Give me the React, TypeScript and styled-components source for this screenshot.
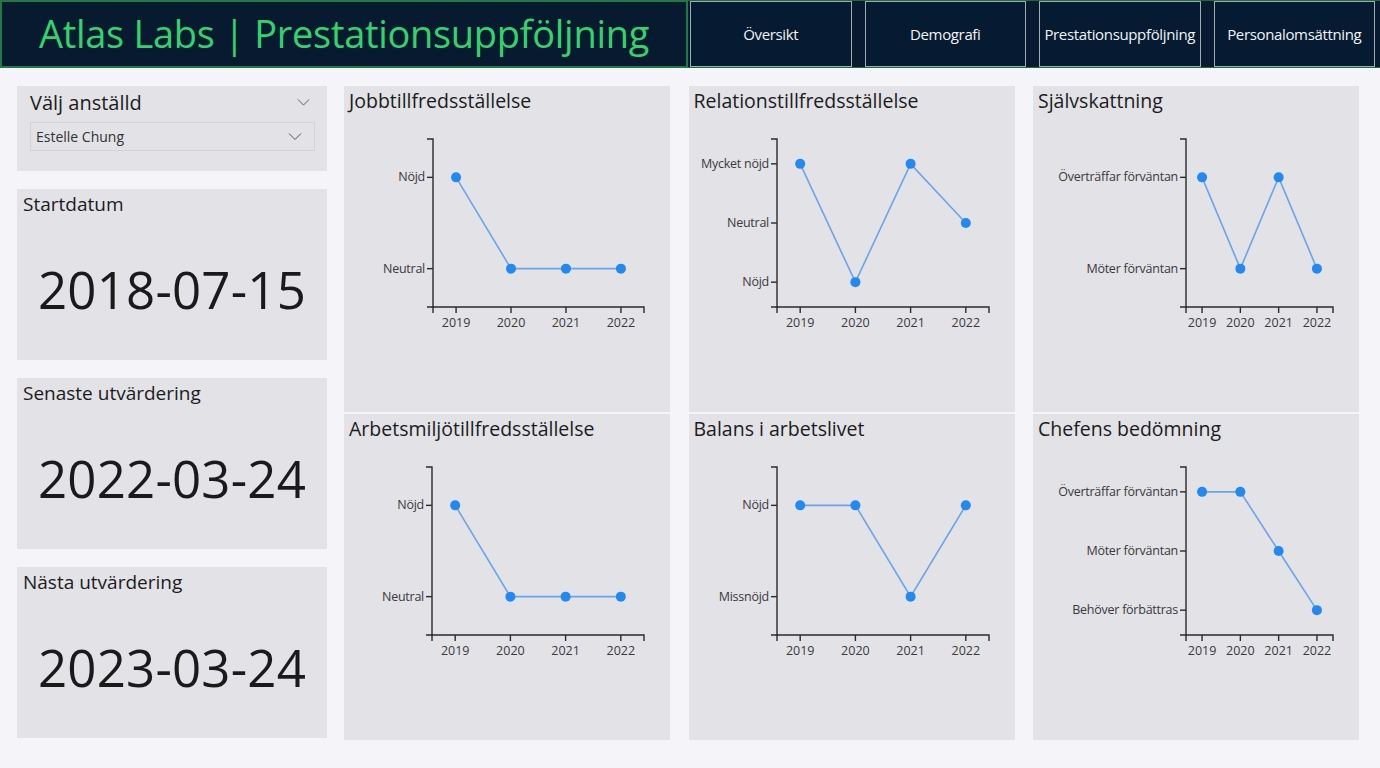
import { FC } from 'react';
import styled, { createGlobalStyle } from 'styled-components';

const GlobalStyle = createGlobalStyle`
    html, body {
        margin: 0;
        padding: 0;
        background: #f4f4f9;
        font-family: "Open Sans", "Noto Sans", sans-serif;
        color: #222;
    }
`;

const Page = styled.div`
    width: 1380px;
    height: 768px;
    overflow: hidden;
    background: #f4f4f9;
`;

const Header = styled.header`
    display: flex;
    height: 68px;
    background: #071a2f;
`;

const TitleBox = styled.div`
    display: flex;
    align-items: center;
    justify-content: center;
    box-sizing: border-box;
    width: 688px;
    flex-shrink: 0;
    padding-bottom: 2px;
    border: 2px solid #1f7a44;
    color: #2fd56c;
    font-size: 38px;
    letter-spacing: -0.3px;
`;

const Nav = styled.nav`
    display: flex;
    flex: 1;
    gap: 13px;
    padding-left: 2px;
    box-sizing: border-box;
    border-top: 1px solid #1f6a3c;
    border-bottom: 1px solid #1f6a3c;
`;

const NavButton = styled.button`
    box-sizing: border-box;
    width: 161.5px;
    height: 100%;
    padding: 0;
    border: 1px solid #9fadb2;
    background: #061a31;
    color: #f2f4f6;
    font-family: "Open Sans", sans-serif;
    font-size: 15px;
    letter-spacing: -0.35px;
    cursor: pointer;
`;

const Main = styled.main`
    display: grid;
    grid-template-columns: 310px 1015px;
    column-gap: 17px;
    padding: 18px 0 0 17px;
`;

const LeftColumn = styled.div`
    display: flex;
    flex-direction: column;
    gap: 18px;
`;

const Card = styled.div<{ $h: number }>`
    box-sizing: border-box;
    height: ${(p) => p.$h}px;
    background: #e2e2e7;
    display: flex;
    flex-direction: column;
`;

const SlicerHead = styled.div`
    display: flex;
    align-items: center;
    justify-content: space-between;
    padding: 1px 17px 0 13px;
    height: 30px;
    font-size: 20px;
    color: #1c1c1c;
`;

const SelectBox = styled.div`
    display: flex;
    align-items: center;
    justify-content: space-between;
    box-sizing: border-box;
    height: 29px;
    margin: 5px 12px 0 13px;
    padding: 0 12px 0 5px;
    border: 1px solid #d3d3da;
    font-size: 14px;
    color: #333;
`;

const CardLabel = styled.div`
    padding: 2px 6px 0;
    font-size: 19px;
    color: #1c1c1c;
`;

const BigValue = styled.div`
    flex: 1;
    display: flex;
    align-items: center;
    justify-content: center;
    padding-bottom: 0;
    font-size: 51px;
    color: #1a1a1a;
    letter-spacing: 0.2px;
`;

const ChartGrid = styled.div`
    display: grid;
    grid-template-columns: 326px 326px 326px;
    grid-template-rows: 326px 326px;
    column-gap: 18.5px;
    row-gap: 2px;
`;

const ChartPanel = styled.div`
    background: #e2e2e7;
    display: flex;
    flex-direction: column;
`;

const ChartTitle = styled.div`
    height: 36px;
    padding: 1px 0 0 5px;
    box-sizing: border-box;
    font-size: 19.5px;
    color: #1c1c1c;
`;

const Chevron: FC<{ size: number }> = ({ size }) => (
    <svg width={size} height={size / 2 + 2} viewBox="0 0 14 8">
        <polyline points="1,1 7,7 13,1" fill="none" stroke="#555" strokeWidth="1" />
    </svg>
);

const YEARS = ['2019', '2020', '2021', '2022'];
const PAD = 0.42;
const TOP = 17;
const BOTTOM = 185;
const RIGHT = 300;

type ChartProps = {
    title: string;
    levels: string[];
    values: number[];
    axisX: number;
};

const LineChart: FC<ChartProps> = ({ title, levels, values, axisX }) => {
    const yStep = (BOTTOM - TOP) / (levels.length - 1 + 2 * PAD);
    const y = (i: number) => BOTTOM - yStep * (PAD + i);
    const xStep = (RIGHT - axisX) / (YEARS.length - 1 + 2 * PAD);
    const x = (j: number) => axisX + xStep * (PAD + j);
    const pts = values.map((v, j) => `${x(j)},${y(v)}`).join(' ');

    return (
        <ChartPanel>
            <ChartTitle>{title}</ChartTitle>
            <svg width="326" height="240" style={{ display: 'block' }}>
                <g stroke="#2b2b2b" strokeWidth="1.4" fill="none">
                    <path d={`M${axisX - 6},${TOP}H${axisX}V${BOTTOM}H${axisX - 6}`} />
                    <path d={`M${axisX},${BOTTOM + 6}V${BOTTOM}H${RIGHT}V${BOTTOM + 6}`} />
                    {levels.map((_, i) => (
                        <line key={i} x1={axisX - 6} x2={axisX} y1={y(i)} y2={y(i)} />
                    ))}
                    {YEARS.map((_, j) => (
                        <line key={j} x1={x(j)} x2={x(j)} y1={BOTTOM} y2={BOTTOM + 6} />
                    ))}
                </g>
                <g fontFamily="Open Sans, sans-serif" fontSize="12.5" fill="#3a3a3a">
                    {levels.map((l, i) => (
                        <text key={l} x={axisX - 8} y={y(i) + 4} textAnchor="end" letterSpacing="-0.25">
                            {l}
                        </text>
                    ))}
                    {YEARS.map((yr, j) => (
                        <text key={yr} x={x(j)} y={BOTTOM + 20} textAnchor="middle">
                            {yr}
                        </text>
                    ))}
                </g>
                <polyline points={pts} fill="none" stroke="#6aa5ea" strokeWidth="1.6" />
                {values.map((v, j) => (
                    <circle key={j} cx={x(j)} cy={y(v)} r="5" fill="#2288f2" />
                ))}
            </svg>
        </ChartPanel>
    );
};

const NÖJD = ['Neutral', 'Nöjd'];
const FÖRV = ['Möter förväntan', 'Överträffar förväntan'];

const charts: ChartProps[] = [
    { title: 'Jobbtillfredsställelse', levels: NÖJD, values: [1, 0, 0, 0], axisX: 89 },
    { title: 'Relationstillfredsställelse', levels: ['Nöjd', 'Neutral', 'Mycket nöjd'], values: [2, 0, 2, 1], axisX: 88 },
    { title: 'Självskattning', levels: FÖRV, values: [1, 0, 1, 0], axisX: 153 },
    { title: 'Arbetsmiljötillfredsställelse', levels: NÖJD, values: [1, 0, 0, 0], axisX: 88 },
    { title: 'Balans i arbetslivet', levels: ['Missnöjd', 'Nöjd'], values: [1, 1, 0, 1], axisX: 88 },
    {
        title: 'Chefens bedömning',
        levels: ['Behöver förbättras', 'Möter förväntan', 'Överträffar förväntan'],
        values: [2, 2, 1, 0],
        axisX: 153,
    },
];

const dates = [
    { label: 'Startdatum', value: '2018-07-15' },
    { label: 'Senaste utvärdering', value: '2022-03-24' },
    { label: 'Nästa utvärdering', value: '2023-03-24' },
];

const App: FC = () => (
    <Page>
        <GlobalStyle />
        <Header>
            <TitleBox>Atlas Labs | Prestationsuppföljning</TitleBox>
            <Nav>
                <NavButton>Översikt</NavButton>
                <NavButton>Demografi</NavButton>
                <NavButton>Prestationsuppföljning</NavButton>
                <NavButton>Personalomsättning</NavButton>
            </Nav>
        </Header>
        <Main>
            <LeftColumn>
                <Card $h={85}>
                    <SlicerHead>
                        <span>Välj anställd</span>
                        <Chevron size={13} />
                    </SlicerHead>
                    <SelectBox>
                        <span>Estelle Chung</span>
                        <Chevron size={14} />
                    </SelectBox>
                </Card>
                {dates.map((d) => (
                    <Card $h={171} key={d.label}>
                        <CardLabel>{d.label}</CardLabel>
                        <BigValue>{d.value}</BigValue>
                    </Card>
                ))}
            </LeftColumn>
            <ChartGrid>
                {charts.map((c) => (
                    <LineChart key={c.title} {...c} />
                ))}
            </ChartGrid>
        </Main>
    </Page>
);

export default App;
